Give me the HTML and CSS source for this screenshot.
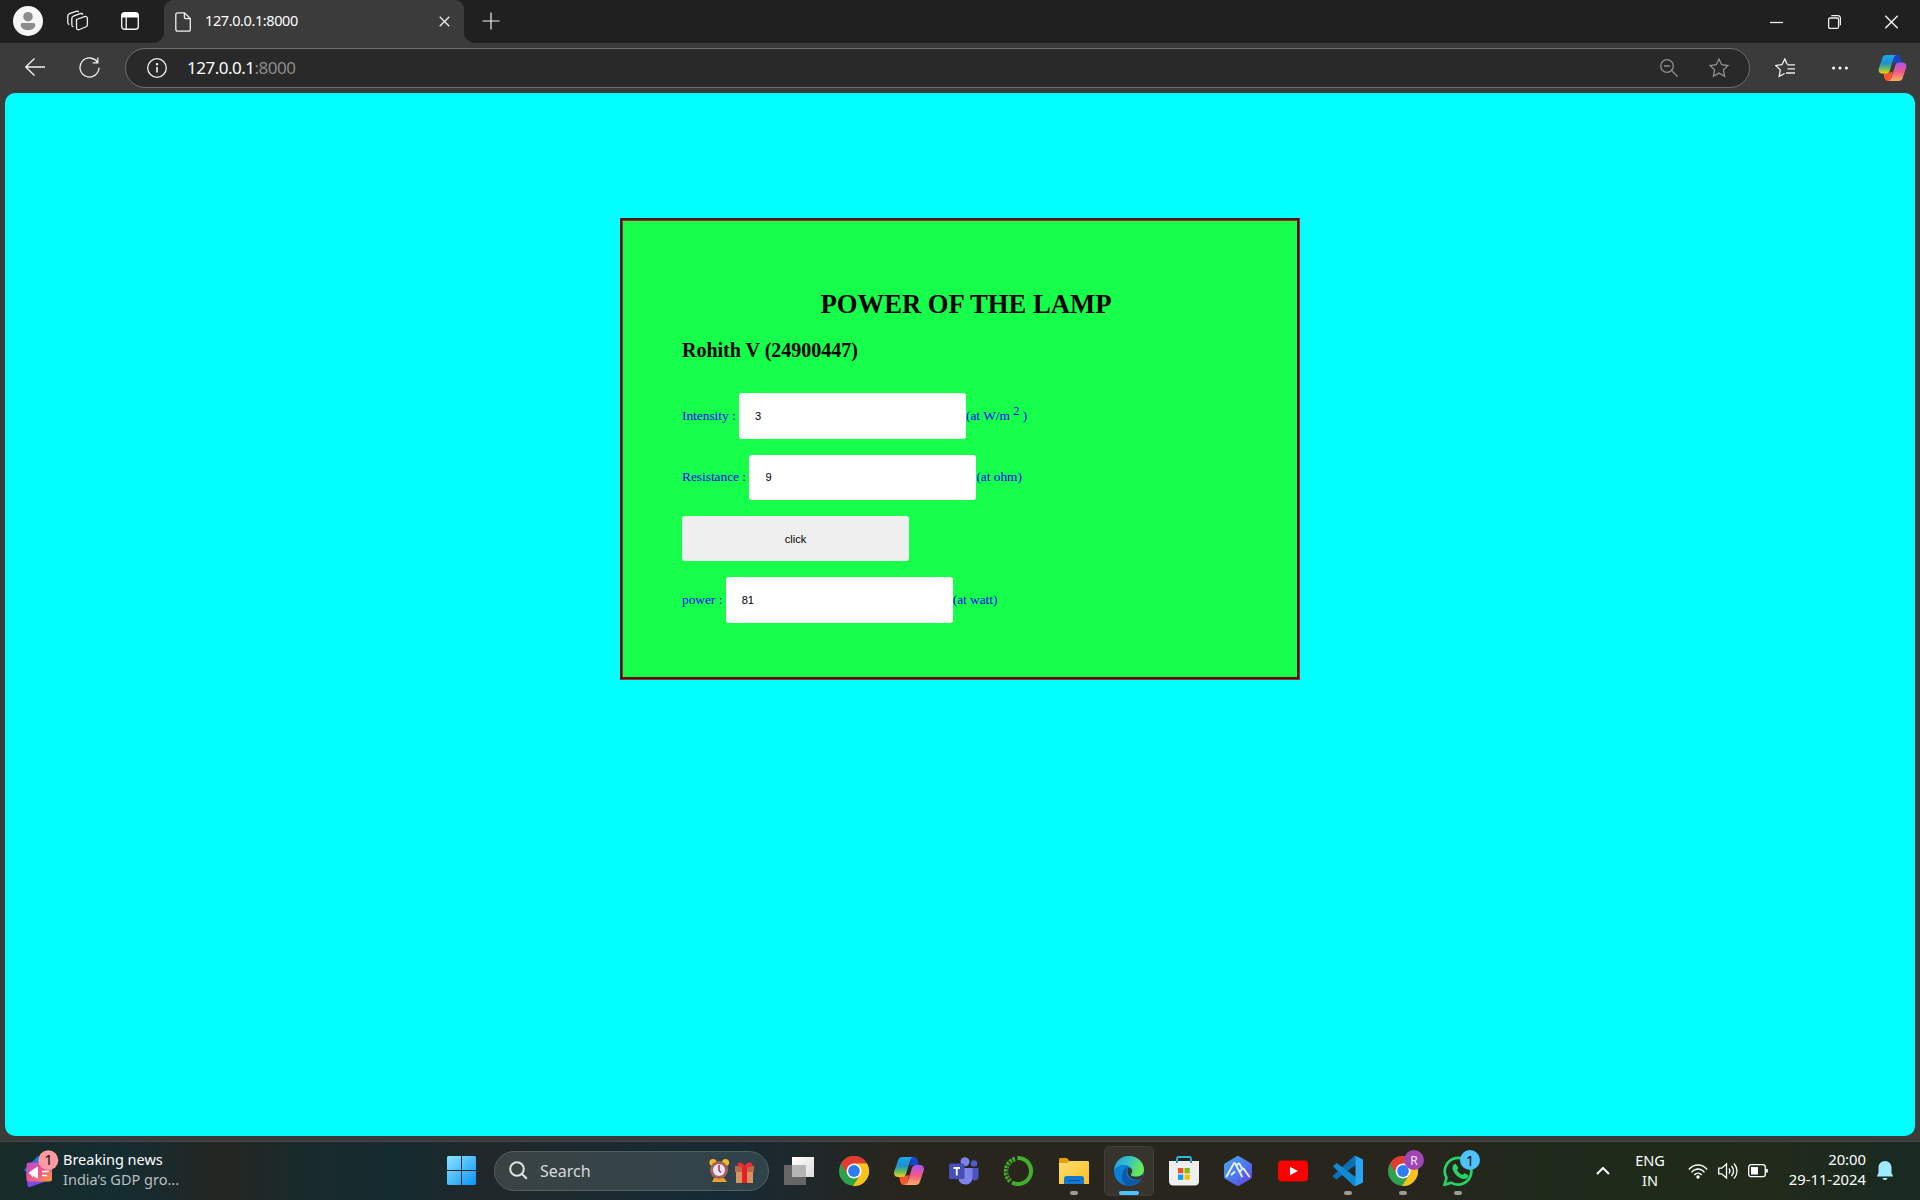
FILE: index.html
```html
<!DOCTYPE html>
<html lang="en">
<head>
<meta charset="utf-8">
<title>127.0.0.1:8000</title>
<link rel="stylesheet" href="styles.css">
</head>
<body>
<svg class="defs" aria-hidden="true">
  <defs>
    <linearGradient id="cpA" x1="0" y1="0" x2="0" y2="1"><stop offset="0" stop-color="#1ba7f0"/><stop offset=".45" stop-color="#1f8fd0"/><stop offset=".7" stop-color="#5dbb63"/><stop offset="1" stop-color="#f7cf16"/></linearGradient>
    <linearGradient id="cpB" x1="0" y1="0" x2="0" y2="1"><stop offset="0" stop-color="#a855f0"/><stop offset=".5" stop-color="#f0568c"/><stop offset="1" stop-color="#ffb05c"/></linearGradient>
    <linearGradient id="winG" x1="0" y1="0" x2="1" y2="1"><stop offset="0" stop-color="#8be4ff"/><stop offset="1" stop-color="#0a94f8"/></linearGradient>
    <linearGradient id="newsG" x1="0" y1="0" x2="1" y2="1"><stop offset="0" stop-color="#b54fd0"/><stop offset=".5" stop-color="#f2558a"/><stop offset="1" stop-color="#ff9a3c"/></linearGradient>
    <linearGradient id="edgeA" x1="0" y1="0" x2="1" y2=".3"><stop offset="0" stop-color="#1f9fe8"/><stop offset=".5" stop-color="#35c1c8"/><stop offset="1" stop-color="#6bea50"/></linearGradient>
    <linearGradient id="foldG" x1="0" y1="0" x2="1" y2="1"><stop offset="0" stop-color="#ffdf70"/><stop offset="1" stop-color="#fcbc24"/></linearGradient>
    <linearGradient id="hexG" x1="0" y1="0" x2="1" y2="1"><stop offset="0" stop-color="#4aa8e8"/><stop offset=".5" stop-color="#4a7cf0"/><stop offset="1" stop-color="#6a38e0"/></linearGradient>
    <linearGradient id="viewG" x1="0" y1="0" x2="1" y2="1"><stop offset="0" stop-color="#fff"/><stop offset="1" stop-color="#dcdcdc"/></linearGradient>
    <symbol id="copilot" viewBox="0 0 30 28">
      <path d="M17 0h3c2 0 3 1 3.600 3L25 8h-6l-3 1z" fill="#1746c9"/>
      <path d="M13 28h-3c-2 0-3-1-3.600-3L5 19h6l4-1z" fill="#f4582e"/>
      <path d="M8.500 0H20c-2 0-3 1-3.600 3L12 17c-.7 2-2 3-4 3H4c-3 0-4.600-2.500-3.800-5.500L4 3.500C4.700 1 6 0 8.500 0z" fill="url(#cpA)"/>
      <path d="M21.500 28H10c2 0 3-1 3.600-3L18 11c.7-2 2-3 4-3h4c3 0 4.600 2.500 3.800 5.500L26 24.500c-.7 2.500-2 3.500-4.500 3.500z" fill="url(#cpB)"/>
    </symbol>
    <symbol id="chrome" viewBox="0 0 30 30">
      <circle cx="15" cy="15" r="15" fill="#2ba24c"/>
      <path d="M2 7.500A15 15 0 0 1 28 7.500L15 8.300 8.500 18.800z" fill="#e33b2e"/>
      <path d="M28 7.500A15 15 0 0 1 14 30l7.500-11.500L15 7.500z" fill="#fcc21b"/>
      <circle cx="15" cy="15" r="7.500" fill="#fff"/><circle cx="15" cy="15" r="5.900" fill="#2f7bf0"/>
    </symbol>
  </defs>
</svg>

<div class="tabstrip">
  <svg class="avatar" viewBox="0 0 30 30"><circle cx="15" cy="15" r="15" fill="#f7f7f7"/><circle cx="15" cy="10.700" r="4.800" fill="#8c8c8c"/><path d="M9.500 17h11c1 0 1.700.7 1.700 1.700 0 3.300-3 5.300-7.200 5.300s-7.200-2-7.200-5.300c0-1 .7-1.700 1.700-1.700z" fill="#8c8c8c"/></svg>
  <svg class="spaces line" viewBox="0 0 22 22"><path d="M9.500 9.500l8-2.900c1.600-.5 2.900.2 2.900 1.900v6.200c0 1.200-.6 1.900-1.700 2.300l-6.300 2.500c-1.500.6-2.900 0-2.900-1.700zM6.300 16.800c-1-.2-1.500-.9-1.500-2V8.500c0-1.200.6-2 1.700-2.400l6.600-2.400c1.200-.4 2.300-.2 2.800.8M2.300 14.500C1.300 14.300.8 13.500.8 12.500V6c0-1.200.6-2 1.700-2.400L9 1.300c1.200-.4 2.300-.2 2.800.8"/></svg>
  <svg class="tabact" viewBox="0 0 18 18"><rect x=".7" y=".7" width="16.600" height="16.600" rx="2.800" fill="none" stroke="#eee" stroke-width="1.400"/><path d="M.5 5.400V3C.5 1.500 1.500.5 3 .5h12c1.500 0 2.500 1 2.500 2.500v2.400z" fill="#fff"/><path d="M5.200 5v12" stroke="#eee" stroke-width="1.400"/></svg>
  <div class="tab">
    <svg class="page line" viewBox="0 0 16 20"><path d="M2.700.8h6.800l5.800 5.800v10.700c0 1.100-.8 1.900-1.900 1.900H2.700c-1.100 0-1.900-.8-1.900-1.900V2.700C.8 1.600 1.600.8 2.700.8zM9.400.8V5c0 1 .7 1.700 1.700 1.700h4.200"/></svg>
    <span class="tabtitle">127.0.0.1:8000</span>
    <svg class="tabclose line" viewBox="0 0 11 11"><path d="M.7.700l9.600 9.600M10.300.7L.7 10.300"/></svg>
  </div>
  <svg class="newtab line" viewBox="0 0 18 18"><path d="M9 .5v17M.5 9h17"/></svg>
  <div class="winbtns">
    <svg class="line" width="13" height="14" viewBox="0 0 13 14"><path d="M0 7.500h13"/></svg>
    <svg class="line" width="13" height="14" viewBox="0 0 13 14"><rect x=".6" y="3" width="10" height="10.300" rx="1.500"/><path d="M3.300.7h6.500c1.500 0 2.600 1 2.600 2.600v7"/></svg>
    <svg class="line" width="13" height="14" viewBox="0 0 13 14"><path d="M.3.800l12.400 12.400M12.700.8L.3 13.200"/></svg>
  </div>
</div>

<div class="toolbar">
  <svg class="back line" viewBox="0 0 20 18"><path d="M20 9H1M9.500.5L.8 9l8.700 8.500"/></svg>
  <svg class="reload line" viewBox="0 0 21 21"><path d="M18.600 5.500A9.500 9.500 0 1 0 20 10.800M18.800.5v5.300h-5.200"/></svg>
  <div class="address">
    <svg class="info line" viewBox="0 0 20 20"><circle cx="10" cy="10" r="9.300"/><path d="M10 9v5.500" stroke-width="1.600"/><circle cx="10" cy="6.200" r=".6" fill="#eee"/></svg>
    <span class="url">127.0.0.1<span class="port">:8000</span></span>
    <svg class="zoomout dim" viewBox="0 0 18 18"><circle cx="7" cy="7" r="6.300"/><path d="M11.700 11.700l5.800 5.800M4 7h6"/></svg>
    <svg class="star dim" viewBox="0 0 20 20"><path d="M10 1l2.700 5.700 6.300.8-4.600 4.300 1.200 6.400L10 15.100l-5.600 3.100 1.200-6.400L1 7.500l6.300-.8z"/></svg>
  </div>
  <svg class="favs line" viewBox="0 0 20 20"><path d="M12.300 6.600L9.800.9 7 6.700.8 7.500l4.500 4.400-1.100 6.500 5.400-2.900M12.500 6.800H20M12.500 10.900H20M11 15h9"/></svg>
  <svg class="more" viewBox="0 0 16 4"><circle cx="1.600" cy="2" r="1.500"/><circle cx="8" cy="2" r="1.500"/><circle cx="14.400" cy="2" r="1.500"/></svg>
  <svg class="cop"><use href="#copilot"/></svg>
</div>

<main class="viewport">
  <div class="box">
    <h1>POWER OF THE LAMP</h1>
    <h3>Rohith V (24900447)</h3>
    <form>
      <div class="formelt"><span>Intensity : </span><input type="text" value="3"><span>(at W/m <sup>2</sup> )</span></div>
      <div class="formelt"><span>Resistance : </span><input type="text" value="9"><span>(at ohm)</span></div>
      <div class="formelt"><input type="button" value="click"></div>
      <div class="formelt"><span>power : </span><input type="text" value="81"><span>(at watt)</span></div>
    </form>
  </div>
</main>

<footer class="taskbar">
  <div class="news">
    <svg width="36" height="38" viewBox="0 0 36 38"><path d="M0 20l14-14 8 3-6 24z" fill="#2572d8"/><path d="M2 22h24l-3 9-17 6c-1.500.4-2.200-.2-2.500-1.500z" fill="#7a4be8"/><rect x="2.500" y="12.500" width="25.500" height="19" rx="2.500" fill="url(#newsG)"/><path d="M5 23l8.500-6v11zM7 24l2 3.500" fill="#fff" stroke="#fff"/><path d="M18 21.500h7M18 25.500h5" stroke="#fff" stroke-width="1.500"/><circle cx="24.300" cy="10.300" r="10" fill="#ff99a4"/><text x="24.500" y="15.400" class="badge">1</text></svg>
    <div class="newstext"><span>Breaking news</span><span class="sub">India’s GDP gro...</span></div>
  </div>
  <svg class="start" viewBox="0 0 29 29"><path d="M1 0h13v14H0V1zM15 0h13l1 1v13H15zM0 15h14v14H1l-1-1zM15 15h14v13l-1 1H15z" fill="url(#winG)"/></svg>
  <div class="search">
    <svg class="mag" viewBox="0 0 19 19"><circle cx="8" cy="8" r="6.800"/><path d="M12.800 12.800l5 5"/></svg>
    <span>Search</span>
    <svg class="gifts" width="46" height="26" viewBox="0 0 46 26"><circle cx="4" cy="4.500" r="3.600" fill="#f7b820"/><circle cx="16.500" cy="4.500" r="3.600" fill="#f7b820"/><path d="M5 20h10l3 4H3z" fill="#eaa12b"/><circle cx="10" cy="12" r="9" fill="#a56359"/><circle cx="10" cy="12" r="6" fill="#e9e6f8"/><path d="M10 7v5.500l2 2" stroke="#c61f3d" stroke-width="1.500" fill="none"/><path d="M27 11h17v14H27z" fill="#d9925f"/><path d="M26 8h19v6H26z" fill="#b96b48"/><path d="M33 8h5v17h-5z" fill="#e42026"/><path d="M35.500 8c-3-5-7-4-7-1.500L30 9h12l1.500-2.500C43.500 4 38.500 3 35.500 8z" fill="#f02b33"/></svg>
  </div>
  <div class="apps">
    <div class="app"><svg width="30" height="30" viewBox="0 0 30 30"><path d="M0 9h22v20H0z" fill="#666"/><path d="M8 1h22v20H8z" fill="url(#viewG)"/><path d="M8 9h14v12H8z" fill="#b5b5b5"/></svg></div>
    <div class="app"><svg width="30" height="30"><use href="#chrome"/></svg></div>
    <div class="app"><svg width="30" height="28"><use href="#copilot"/></svg></div>
    <div class="app"><svg width="30" height="28" viewBox="0 0 30 28"><circle cx="25" cy="6.500" r="3.300" fill="#4f58c8"/><path d="M21 11h8.500v9c0 3-3 4-6 3z" fill="#4a53c0"/><circle cx="16" cy="4.800" r="4.500" fill="#7b83eb"/><path d="M10 11h13.500v9c0 5-3 7.500-7 7.500s-7-3-7-6z" fill="#7b83eb"/><rect y="6.500" width="15.500" height="15.500" rx="1.500" fill="#474eb8"/><path d="M4.500 11h6.500M7.750 11v7.500" stroke="#fff" stroke-width="1.800"/></svg></div>
    <div class="app"><svg width="31" height="30" viewBox="0 0 31 30" fill="none" stroke="#43b02a"><path d="M14.500 2A13 13 0 1 1 9 26.500" stroke-width="4"/><path d="M12 3A13 13 0 0 0 8 25.700" stroke-width="4.500" stroke-dasharray="2.500 1"/><path d="M10 4.500A13 13 0 0 0 7 24" stroke="#28251d" stroke-width="1" stroke-dasharray="1.500 1.500"/></svg></div>
    <div class="app running"><svg width="30" height="28" viewBox="0 0 30 28"><path d="M0 2.500C0 1.500.7 1 1.500 1H8l3 3.500V9H0z" fill="#e0a00a"/><path d="M0 6h8l3-2h17.500c1 0 1.500.7 1.500 1.500V27H0z" fill="url(#foldG)"/><path d="M5 27v-5.500c0-1.500 1-2.500 2.500-2.500h15c1.500 0 2.500 1 2.500 2.500V27z" fill="#0f78cf"/><path d="M9 23.500h12" stroke="#064b91"/></svg></div>
    <div class="app active"><svg width="30" height="30" viewBox="0 0 30 30"><circle cx="15" cy="15" r="15" fill="#0c7fd6"/><path d="M27.600 22.800C24.500 27.500 20 30 15 30 10 29 7.500 24.500 8 20c.4-4.500 3-8.500 6.500-9.500-3 4-2.500 8.500.5 11.300 3.500 3.200 8.500 3 12.600 1z" fill="#0f58a6"/><path d="M0 14.500C.5 6 7 0 15 0c9 0 15 6.500 15 13.500 0 4.500-3.500 7.300-8.300 7.300-3.300 0-5-.8-5-2 0-1 1.500-1.500 1.500-3.800 0-3.500-3.500-6-8-6C5.500 9 1.500 11 0 14.500z" fill="url(#edgeA)"/><path d="M14.500 11.500c2.300.3 3.700 1.800 3.700 3.500 0 2.300-1.500 2.800-1.500 3.800 0 1.200 1.700 2 5 2 3 0 5-.8 6.500-2.200L30 21l-2.400 1.800c-4.100 1.500-8.600 1.200-11.600-1.500-2.500-2.500-3.300-6.300-1.500-9.800z" fill="#37342d"/></svg></div>
    <div class="app"><svg width="30" height="30" viewBox="0 0 30 30"><path d="M8 8V2.500C8 1.500 8.500 1 9.500 1h11c1 0 1.500.5 1.500 1.500V8" fill="none" stroke="#2cb8e8" stroke-width="1.800"/><path d="M0 5h30v20c0 3-1.500 4.500-4.500 4.500h-21C1.500 29.500 0 28 0 25z" fill="#efefef"/><path d="M8 5v2M22 5v2" stroke="#1490c4" stroke-width="1.800"/><path d="M9 12h5.300v5.300H9z" fill="#f05022"/><path d="M15.500 12h5.300v5.300h-5.300z" fill="#7eba00"/><path d="M9 18.500h5.300v5.300H9z" fill="#00a3ee"/><path d="M15.500 18.500h5.300v5.300h-5.300z" fill="#ffb901"/></svg></div>
    <div class="app"><svg width="28" height="30" viewBox="0 0 28 30"><path d="M12.500.5c1-.6 2-.6 3 0L26.500 7c1 .6 1.500 1.300 1.500 2.500v11c0 1.200-.5 2-1.500 2.500l-11 6.500c-1 .6-2 .6-3 0L1.500 23C.5 22.500 0 21.700 0 20.500v-11C0 8.300.5 7.600 1.500 7z" fill="url(#hexG)"/><path d="M2.500 20.500L9.500 8q1-1.500 2 0L18 20.500M13.500 8.500q1.200-2 2.400 0L18 12.500M16.500 15l1.500-2q1.200-1.200 2.200.5l5 7M7.500 18.500l3-2.500" fill="none" stroke="#eaf2ff" stroke-width="1.900" stroke-linecap="round"/></svg></div>
    <div class="app"><svg width="30" height="22" viewBox="0 0 30 22"><rect y=".5" width="30" height="21" rx="4" fill="#f00"/><path d="M12 6.800v8.400l8-4.200z" fill="#fff"/></svg></div>
    <div class="app running"><svg width="30" height="30" viewBox="0 0 30 30"><path d="M0 19.500L21 0l3 2v6L3.500 23.500 0 21z" fill="#0871b8"/><path d="M0 10.500L3.500 7 24 22v6l-3 2z" fill="#1489d3"/><path d="M21 0l1.500-.2L30 3.500v23l-7.500 3.700L21 30l1.500-1V1z" fill="#27a4f2"/></svg></div>
    <div class="app running"><svg class="badged" width="36" height="36" viewBox="0 0 36 36"><use href="#chrome" x="0" y="6" width="30" height="30"/><circle cx="26" cy="10" r="10" fill="#a343b8"/><text x="26" y="14.500" class="badge light">R</text></svg></div>
    <div class="app running"><svg class="badged" width="37" height="36" viewBox="0 0 37 36"><path d="M1.500 34.800l2-7a13.300 13.300 0 1 1 5 5z" fill="none" stroke="#25d366" stroke-width="2.700"/><path d="M10 15l2.500-1.500 3 4.500-1.500 2c1.500 2.500 3 4 5.500 5l2-2 4 2.500c0 2.500-2.500 4-5 3.500-5.500-1-10-5.500-11-10.500z" fill="#25d366"/><circle cx="27" cy="10" r="10" fill="#4cc2ff"/><text x="27" y="15.500" class="badge">1</text></svg></div>
  </div>
  <div class="tray">
    <svg class="chev" viewBox="0 0 14 8"><path d="M1 7l6-6 6 6"/></svg>
    <div class="lang"><span>ENG</span><span>IN</span></div>
    <svg class="wifi" viewBox="0 0 20 16"><path d="M.8 6.500c5-6 13.400-6 18.400 0M3.500 9.300c3.800-4.400 9.200-4.400 13 0M6.300 12c2-2.500 5.400-2.500 7.400 0"/><circle cx="10" cy="14" r="1.700" fill="#fff" stroke="none"/></svg>
    <svg class="vol" viewBox="0 0 20 18"><path d="M.7 6.200h3L8.500 2v14l-4.800-4.200h-3zM11 6.500c1.200 1.500 1.200 3.500 0 5M13.500 4c2.500 3 2.500 7 0 10M16 1.500c4 4.500 4 10.500 0 15"/></svg>
    <svg class="batt" viewBox="0 0 20 14"><rect x=".7" y=".7" width="16.600" height="12" rx="2.500"/><path d="M3 3h7v7.500H3z" fill="#fff" stroke="none"/><path d="M18.800 5v3.500" stroke-width="2"/></svg>
    <div class="clock"><span>20:00</span><span>29-11-2024</span></div>
    <svg class="bell" viewBox="0 0 16 20"><path d="M8 0c4 0 6.500 3 6.500 6.500V12L16 15v.5H0V15l1.500-3V6.500C1.500 3 4 0 8 0zM5.500 17h5c-.4 1.400-1.200 2-2.500 2s-2.100-.6-2.500-2z" fill="#9eeaff"/></svg>
  </div>
</footer>
</body>
</html>
```
FILE: styles.css
```css
* { box-sizing: border-box; }
html, body { margin: 0; height: 100%; }
body {
  display: flex;
  flex-direction: column;
  width: 1920px;
  height: 1200px;
  overflow: hidden;
  background: #3b3b3b;
  color: #fff;
  font-family: "Noto Sans", "Open Sans", sans-serif;
}
svg { flex: none; display: block; }
.defs { position: absolute; width: 0; height: 0; }
.line { fill: none; stroke: #f0f0f0; stroke-width: 1.3; }
.dim { fill: none; stroke: #8f8f8f; stroke-width: 1.3; }

/* tab strip */
.tabstrip {
  display: flex;
  align-items: center;
  height: 43px;
  flex: none;
  padding-left: 13px;
  background: #202020;
}
.avatar { width: 30px; height: 30px; margin-top: -2px; }
.spaces { width: 22px; height: 22px; margin-left: 24px; margin-top: -1px; }
.tabact { width: 18px; height: 18px; margin-left: 32px; margin-top: -1px; }
.tab {
  position: relative;
  display: flex;
  align-items: center;
  width: 300px;
  height: 43px;
  margin-left: 25px;
  padding: 0 14px 0 11px;
  background: #3b3b3b;
  border-radius: 9px 9px 0 0;
}
.tab::before, .tab::after {
  content: "";
  position: absolute;
  bottom: 0;
  width: 10px;
  height: 10px;
}
.tab::before { left: -10px; background: radial-gradient(circle at 0 0, #202020 9.500px, #3b3b3b 10px); }
.tab::after { right: -10px; background: radial-gradient(circle at 100% 0, #202020 9.500px, #3b3b3b 10px); }
.page { width: 16px; height: 20px; }
.tabtitle { flex: 1; margin-left: 14px; padding-bottom: 3px; font-size: 14.500px; letter-spacing: -0.400px; }
.tabclose { width: 11px; height: 11px; }
.newtab { width: 18px; height: 18px; margin-left: 17.500px; margin-top: -1px; stroke-width: 1.200; }
.winbtns { display: flex; gap: 44.500px; margin-left: auto; margin-right: 22px; }

/* toolbar */
.toolbar {
  display: flex;
  align-items: center;
  height: 50px;
  flex: none;
  padding-left: 25px;
}
.back { width: 20px; height: 18px; margin-top: -2px; }
.reload { width: 21px; height: 21px; margin-left: 34px; margin-top: -1px; }
.address {
  display: flex;
  align-items: center;
  width: 1625px;
  height: 40px;
  margin-left: 25px;
  padding: 0 20px 0 21px;
  border: 1px solid #6e6e6e;
  border-radius: 20px;
  background: #292929;
}
.info { width: 20px; height: 20px; }
.url { flex: 1; margin-left: 20px; padding-bottom: 2px; font-size: 17px; letter-spacing: -0.500px; }
.port { color: #8c8c8c; }
.zoomout { width: 18px; height: 18px; }
.star { width: 20px; height: 20px; margin-left: 31px; }
.favs { width: 20px; height: 20px; margin-left: 25px; }
.more { width: 16px; height: 4px; margin-left: 37px; fill: #fff; }
.cop { width: 29px; height: 26px; margin-left: 30px; }

/* page content */
.viewport {
  height: 1043px;
  flex: none;
  margin: 0 5px;
  padding-top: 125px;
  border-radius: 10px;
  background: #0ff;
}
.box {
  width: 680px;
  height: 462px;
  margin: 0 auto;
  padding: 66px 47px 0 59px;
  border: 3px groove brown;
  background: #15ff4b;
  color: #00f;
  font-family: "Liberation Serif", serif;
  font-size: 13.333px;
}
h1 { margin: 0; color: #000; font-size: 26.667px; line-height: 34px; text-align: center; }
h3 { margin: 14px 0 0; color: #000; font-size: 20px; line-height: 30px; }
form { display: flex; flex-direction: column; gap: 15.750px; margin-top: 28.400px; }
.formelt { display: flex; align-items: center; height: 45.500px; white-space: pre; }
.formelt span { line-height: 20px; }
input {
  flex: none;
  width: 227px;
  height: 45.500px;
  margin: 0;
  padding: 0 16px;
  border: 0;
  border-radius: 3px;
  background: #fff;
  color: #000;
  font: 11.111px "Liberation Sans", sans-serif;
}
input[type="button"] { background: #efefef; }
sup { font-size: 12.500px; line-height: 0; }

/* taskbar */
.taskbar {
  display: flex;
  align-items: center;
  height: 59px;
  flex: none;
  margin-top: 5px;
  padding-bottom: 1px;
  border-top: 1px solid #434847;
  background: linear-gradient(90deg, #182c28 0, #142c31 120px, #242622 220px, #192a2b 300px, #142b30 400px, #20282a 480px, #162a35 720px, #28251d 900px, #28251d 1400px, #1e2a1b 1560px, #212a1b 1780px, #182a22 1920px);
}
.news { display: flex; align-items: center; width: 447px; padding-left: 24px; padding-bottom: 3px; }
.newstext { display: flex; flex-direction: column; margin-left: 3px; font-size: 14.500px; line-height: 20px; }
.sub { color: #b9bfc0; }
.badge { fill: #111; font: 15px "Noto Sans", sans-serif; text-anchor: middle; }
.badge.light { fill: #eee; font-size: 12px; }
.start { width: 29px; height: 29px; }
.search {
  display: flex;
  align-items: center;
  width: 275px;
  height: 40px;
  margin-left: 18px;
  padding: 0 13px 0 14px;
  border: 1px solid #53605f;
  border-radius: 20px;
  background: linear-gradient(90deg, #3a4344, #2f434b);
  color: #d5d9da;
  font-size: 16px;
}
.search span { flex: 1; margin-left: 12px; }
.mag { width: 19px; height: 19px; fill: none; stroke: #dfe3e3; stroke-width: 2; }
.apps { display: flex; gap: 5px; margin-left: 5px; }
.app {
  position: relative;
  display: flex;
  align-items: center;
  justify-content: center;
  width: 49.950px;
  height: 50px;
}
.badged { margin: -6px 0 0 6px; }
.active { border: 1px solid #413e37; border-radius: 5px; background: #37342d; }
.running::after, .active::after {
  content: "";
  position: absolute;
  bottom: 1px;
  width: 8px;
  height: 4px;
  border-radius: 2px;
  background: #9a9a96;
}
.active::after { bottom: 0; width: 20px; background: #4cc2ff; }
.tray { display: flex; align-items: center; margin-left: auto; padding-right: 27px; font-size: 14.500px; line-height: 20px; }
.tray svg { fill: none; stroke: #fff; stroke-width: 1.300; }
.tray .chev { width: 14px; height: 8px; stroke-width: 2; }
.lang { display: flex; flex-direction: column; align-items: center; margin-left: 25px; width: 30px; padding-bottom: 2px; }
.wifi { width: 20px; height: 16px; margin-left: 23px; }
.vol { width: 20px; height: 18px; margin-left: 10px; }
.batt { width: 20px; height: 14px; margin-left: 10px; }
.clock { display: flex; flex-direction: column; align-items: flex-end; width: 80px; margin-left: 18px; padding-bottom: 3px; font-size: 14.800px; white-space: nowrap; }
.tray .bell { width: 16px; height: 20px; margin-left: 11px; stroke: none; }
```
